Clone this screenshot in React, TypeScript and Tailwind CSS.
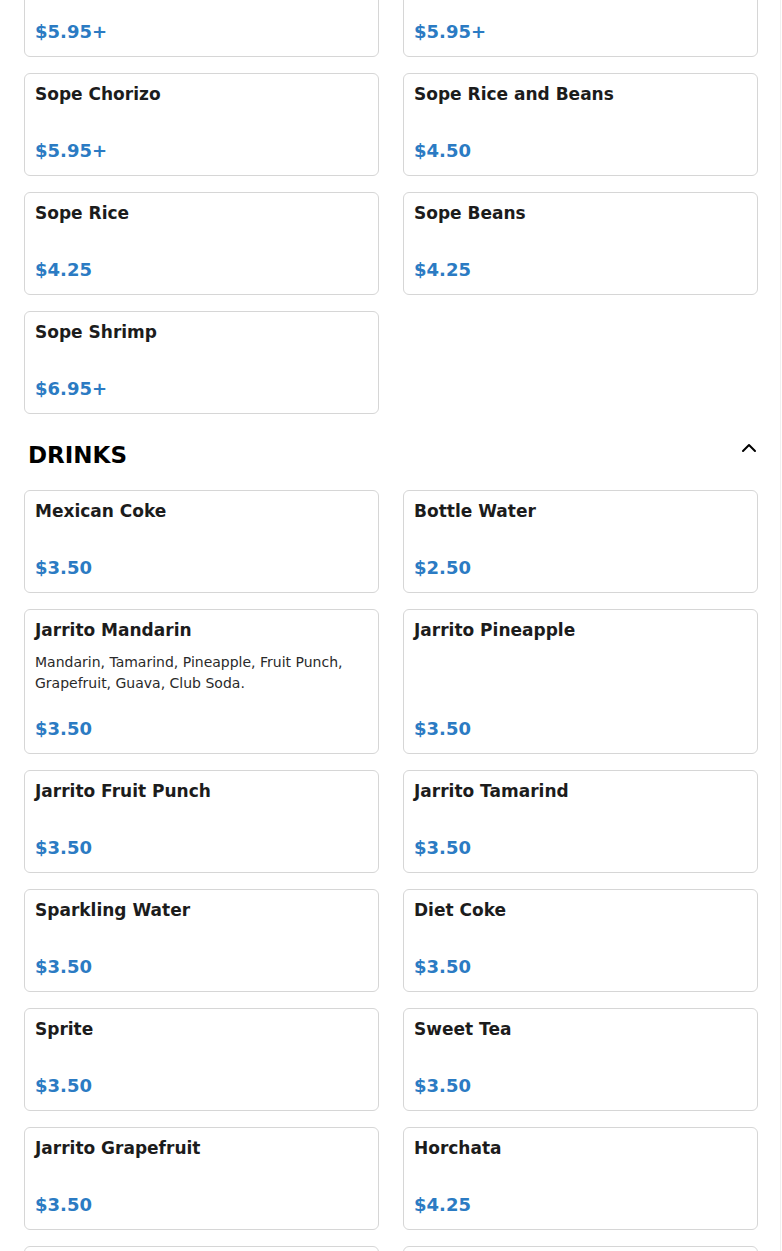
import React from 'react';
import { ChevronUp } from 'lucide-react';

type Item = {
  name: string;
  price: string;
  description?: string;
};

const sopes: Item[] = [
  { name: 'Sope Asada', price: '$5.95+' },
  { name: 'Sope Pastor', price: '$5.95+' },
  { name: 'Sope Chorizo', price: '$5.95+' },
  { name: 'Sope Rice and Beans', price: '$4.50' },
  { name: 'Sope Rice', price: '$4.25' },
  { name: 'Sope Beans', price: '$4.25' },
  { name: 'Sope Shrimp', price: '$6.95+' },
];

const drinks: Item[] = [
  { name: 'Mexican Coke', price: '$3.50' },
  { name: 'Bottle Water', price: '$2.50' },
  {
    name: 'Jarrito Mandarin',
    price: '$3.50',
    description: 'Mandarin, Tamarind, Pineapple, Fruit Punch, Grapefruit, Guava, Club Soda.',
  },
  { name: 'Jarrito Pineapple', price: '$3.50' },
  { name: 'Jarrito Fruit Punch', price: '$3.50' },
  { name: 'Jarrito Tamarind', price: '$3.50' },
  { name: 'Sparkling Water', price: '$3.50' },
  { name: 'Diet Coke', price: '$3.50' },
  { name: 'Sprite', price: '$3.50' },
  { name: 'Sweet Tea', price: '$3.50' },
  { name: 'Jarrito Grapefruit', price: '$3.50' },
  { name: 'Horchata', price: '$4.25' },
  { name: 'Jarrito Guava', price: '$3.50' },
  { name: 'Club Soda', price: '$3.50' },
];

const MenuCard: React.FC<{ item: Item }> = ({ item }) => (
  <div className="flex flex-col rounded-md border border-[#d6d6d6] bg-white p-2.5">
    <h4 className="text-[17px] font-bold leading-[20px] text-[#1c1c1c]">{item.name}</h4>
    <div className="flex-1 pt-3">
      {item.description && (
        <p className="text-[14px] leading-[21px] text-[#2a2a2a]">{item.description}</p>
      )}
    </div>
    <p className="mt-[21px] text-[18px] font-bold leading-[28px] text-[#2b7bc3]">{item.price}</p>
  </div>
);

const App: React.FC = () => {
  return (
    <div
      className="h-[1251px] w-full overflow-hidden bg-white"
      style={{ fontFamily: '"DejaVu Sans", sans-serif' }}
    >
      <div className="w-[781px] border-r border-[#f0f0f0] pl-6 pr-[22px]">
        {/* Sopes, scrolled part way */}
        <div className="-mt-[46px] grid grid-cols-2 gap-x-6 gap-y-4">
          {sopes.map((item) => (
            <MenuCard key={item.name} item={item} />
          ))}
        </div>

        {/* Drinks */}
        <div className="mt-[25px] mb-[18px] flex items-start justify-between pl-1">
          <h3 className="text-[23px] font-bold leading-[33px] text-black">DRINKS</h3>
          <ChevronUp size={24} strokeWidth={2} className="-mr-[3px] -mt-[3px] text-black" />
        </div>
        <div className="grid grid-cols-2 gap-x-6 gap-y-4">
          {drinks.map((item) => (
            <MenuCard key={item.name} item={item} />
          ))}
        </div>
      </div>
    </div>
  );
};

export default App;
